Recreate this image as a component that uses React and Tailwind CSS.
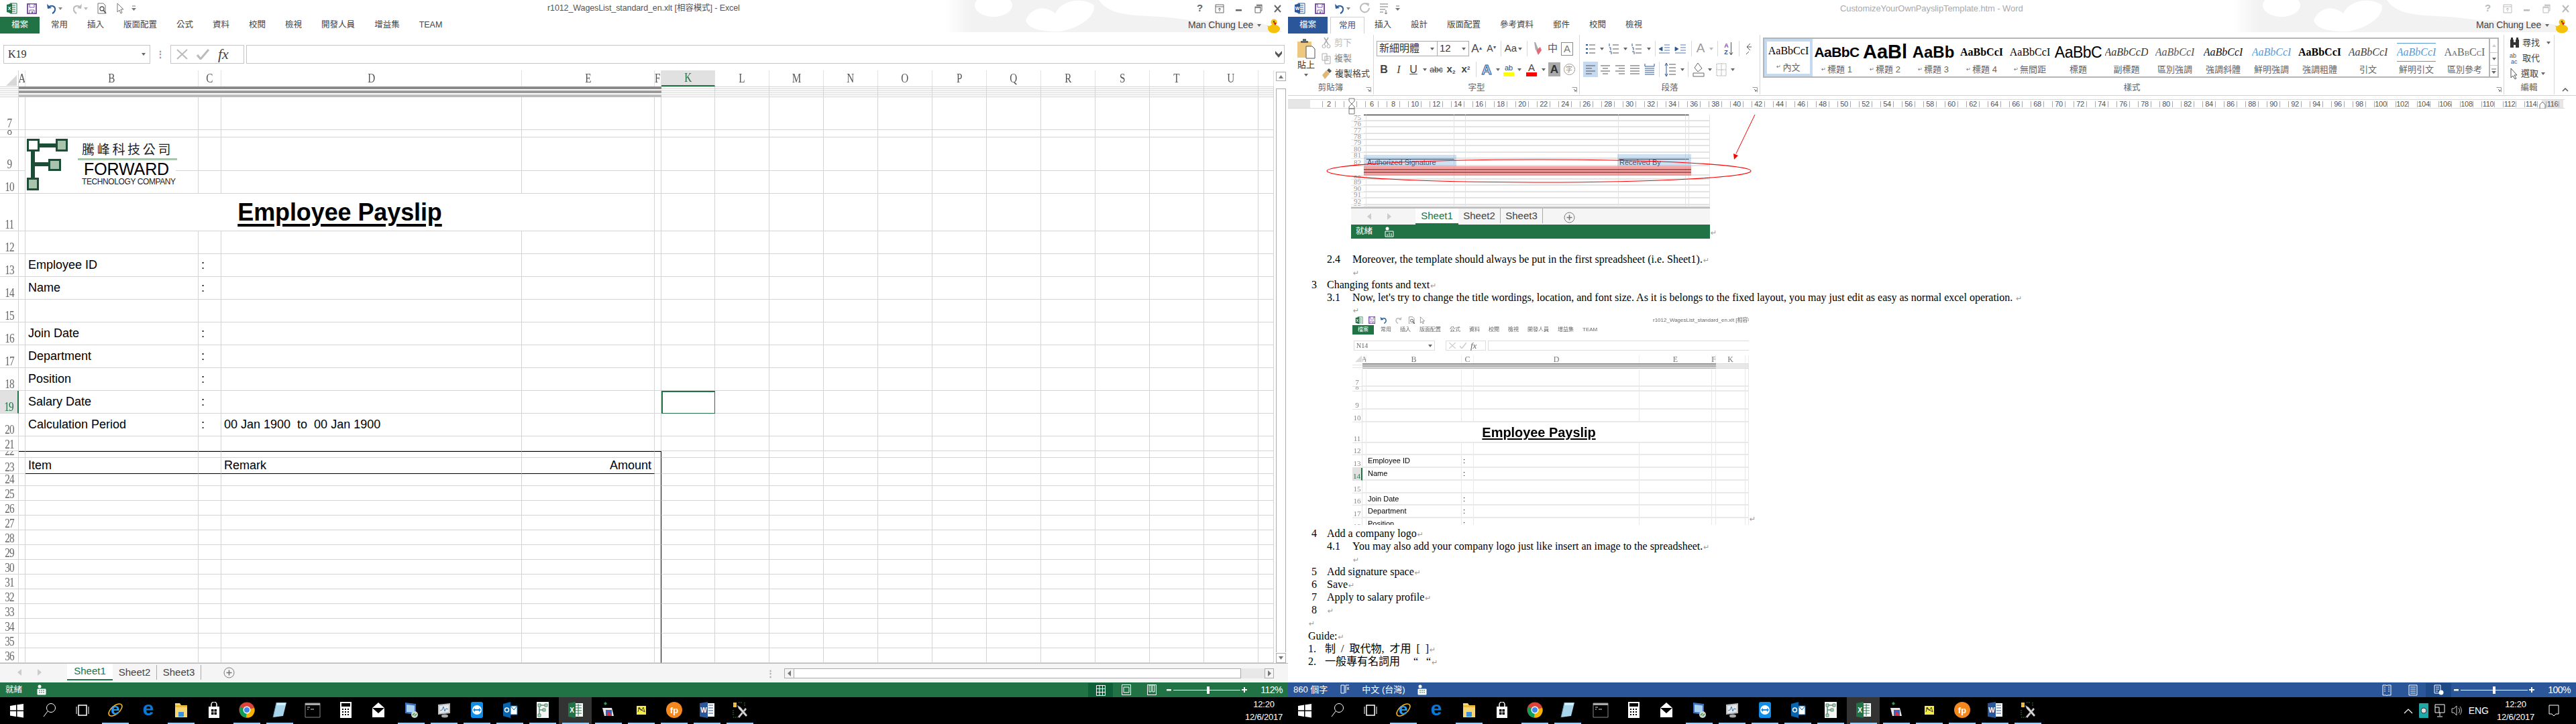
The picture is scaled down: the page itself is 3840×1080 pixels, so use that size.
import clsx from 'clsx'

const SERIF = "font-['Liberation_Serif','Noto_Sans_CJK_TC',serif]"
const SANS = "font-['Liberation_Sans','Noto_Sans_CJK_TC',sans-serif]"

const S = ({ w = 16, h = 16, s = 1, c, children }) => (
  <svg width={w * s} height={h * s} viewBox={`0 0 ${w} ${h}`} className={clsx('shrink-0', c)}>{children}</svg>
)

const Pil = () => <span className="font-['DejaVu_Sans'] text-[11px] text-[#9a9a9a] ml-[1px]">↵</span>
const Caret = ({ c = '#666' }) => <S w={6} h={4}><path d="M0 0h6L3 4z" fill={c} /></S>

// app logos
const AppLogo = ({ color, letter, s = 1 }) => (
  <S w={17} h={17} s={s}>
    <path d="M6 1h10v15H6z" fill="#fff" stroke={color} />
    <path d="M9 4h5M9 7h5M9 10h5M9 13h5" stroke={color} />
    <path d="M1 3l8-2v15l-8-2z" fill={color} />
    <text x="5" y="11" fontSize="7" fontWeight="bold" fill="#fff" textAnchor="middle" fontFamily="Liberation Sans">{letter}</text>
  </S>
)
const SaveIco = ({ s = 1 }) => (
  <S w={15} h={16} s={s}><path d="M1 1h13v14H1z" fill="#fff" stroke="#7d52a8" strokeWidth="2" /><path d="M4 1h7v5H4zM4 10h7v5H4z" fill="#fff" stroke="#7d52a8" /><path d="M7 12h2v3H7z" fill="#7d52a8" /></S>
)
const UndoIco = ({ c = '#2b5f9e', s = 1, flip }) => (
  <S w={16} h={16} s={s} c={flip ? '-scale-x-100' : ''}><path d="M3 6c5-4 11-2 10 4-.4 2-2 4-4 5" fill="none" stroke={c} strokeWidth="2" /><path d="M1 1l1 7 6-1z" fill={c} /></S>
)
const PreviewIco = ({ s = 1 }) => (
  <S w={16} h={17} s={s}><path d="M2 1h8l3 3v12H2z" fill="#fff" stroke="#777" /><circle cx="8" cy="9" r="3" fill="none" stroke="#555" strokeWidth="1.3" /><path d="M10 11l4 5" stroke="#555" strokeWidth="1.6" /></S>
)
const CursorIco = ({ s = 1 }) => (
  <S w={12} h={17} s={s}><path d="M2 1v13l3-3 2 5 2-1-2-5h4z" fill="#fff" stroke="#777" /></S>
)
const Customize = () => <S w={7} h={9}><path d="M1 1h5" stroke="#777" /><path d="M0 4h7L3.500 8z" fill="#777" /></S>

const Launcher = () => <S w={8} h={8}><path d="M.5.500h7v7" fill="none" stroke="#999" /><path d="M3 3l3 3M4 6h2V4" fill="none" stroke="#666" /></S>

const Deco = () => (
  <svg width="512" height="48" viewBox="0 0 512 48" className="absolute right-0 top-0">
    <defs><linearGradient id="fade"><stop offset="0" stopColor="#fff" /><stop offset="1" stopColor="#f2f2f2" /></linearGradient></defs>
    <rect width="40" height="48" fill="url(#fade)" />
    <rect x="40" width="472" height="48" fill="#f2f2f2" />
    <ellipse cx="73" cy="8" rx="28" ry="17" fill="#fff" />
    <path d="M121 30C130 10 150 8 165 20 175 0 205-5 223 8c2 22-33 37-53 39-20 0-45-2-49-17z" fill="#fff" />
    <path d="M230 0h282v48h-8c-24-23-104-13-154-20-50-8-100 2-120-28z" fill="#fff" />
  </svg>
)

const Duck = () => (
  <S w={22} h={24}>
    <ellipse cx="11" cy="17" rx="9" ry="6.500" fill="#f4c20d" />
    <path d="M3 16l-2-4 5 2z" fill="#f4c20d" />
    <circle cx="11" cy="7" r="4.500" fill="#f4c20d" />
    <path d="M10 7l3 5 2-4z" fill="#d81e05" />
    <circle cx="11" cy="6" r="1" fill="#222" />
  </S>
)

const WinControls = ({ c }) => (
  <div className={clsx('flex items-center', c)}>
    <span className="w-[29px] text-center text-[15px] font-bold">?</span>
    <span className="w-[29px] flex justify-center"><S w={14} h={14}><path d="M1 1h12v12H1zM1 4h12M7 11V6M5 8l2-2 2 2" fill="none" stroke="currentColor" /></S></span>
    <span className="w-[29px] flex justify-center"><S w={10} h={10}><path d="M0 6h9v2.500H0z" fill="currentColor" /></S></span>
    <span className="w-[29px] flex justify-center"><S w={12} h={14}><path d="M3 1h8v9H9M1 4h8v9H1zM1 5.500h8M3 2.500h8" fill="none" stroke="currentColor" /></S></span>
    <span className="w-[29px] flex justify-center"><S w={11} h={12}><path d="M1 1l9 10M10 1L1 11" stroke="currentColor" strokeWidth="2" /></S></span>
  </div>
)

const User = ({ c }) => (
  <div className={clsx('flex items-center text-[14px]', c)}>
    <span className="tracking-[-0.2px]">Man Chung Lee</span>
    <span className="ml-[6px] mr-[8px]"><Caret /></span>
    <Duck />
  </div>
)

// Excel window
const COLS = ['A', 'B', 'C', 'D', 'E', 'F', 'K', 'L', 'M', 'N', 'O', 'P', 'Q', 'R', 'S', 'T', 'U', '']
const ROWS = [7, 8, 9, 10, 11, 12, 13, 14, 15, 16, 17, 18, 19, 20, 21, 22, 23, 24, 25, 26, 27, 28, 29, 30, 31, 32, 33, 34, 35, 36]
const LABELS = { 13: 'Employee ID', 14: 'Name', 16: 'Join Date', 17: 'Department', 18: 'Position', 19: 'Salary Date', 20: 'Calculation Period' }

const cellText = (row, col) => {
  if (col === 'B' && LABELS[row]) return LABELS[row]
  if (col === 'C' && LABELS[row]) return ':'
  if (col === 'D' && row === 20) return '00 Jan 1900  to  00 Jan 1900'
  if (row === 23 && col === 'B') return 'Item'
  if (row === 23 && col === 'D') return 'Remark'
  return null
}

const Logo = () => (
  <div className="absolute left-[38px] top-[100px] w-[224px] h-[82px] bg-white flex">
    <S w={66} h={78} c="mt-[2px] ml-[2px]">
      <path d="M9 18v40M18 10h26M10 38h24" stroke="#1c4d36" strokeWidth="6" fill="none" />
      <path d="M1.500 1.500h16v16h-16z" fill="#fff" stroke="#1c4d36" strokeWidth="3" />
      <path d="M44.500 1.500h15v16h-15z" fill="#a9c4ad" stroke="#1c4d36" strokeWidth="3" />
      <path d="M33.500 31.500h16v15h-16z" fill="#a9c4ad" stroke="#1c4d36" strokeWidth="3" />
      <path d="M1.500 59.500h15v16h-15z" fill="#a9c4ad" stroke="#1c4d36" strokeWidth="3" />
    </S>
    <div className="ml-[10px] w-[148px] flex flex-col items-start">
      <div className="mt-[9px] ml-[6px] text-[19px] leading-[20px] tracking-[3.700px] text-[#222] whitespace-nowrap">騰峰科技公司</div>
      <div className="mt-[2px] h-[3px] w-[148px] bg-[#a8c8ae]" />
      <div className="mt-[1px] ml-[9px] text-[25px] leading-[24px] tracking-[-0.1px] text-black whitespace-nowrap">FORWARD</div>
      <div className="mt-[1px] ml-[6px] text-[12px] leading-[13px] tracking-[-0.4px] text-[#222] whitespace-nowrap">TECHNOLOGY  COMPANY</div>
    </div>
  </div>
)

const DARK_BARS = ['bg-[#8a8a8a]', 'bg-[#9a9a9a]', 'bg-[#bcbcbc]']

const HiddenBand = ({ dark }) => (
  <>
    {DARK_BARS.map((bg) => (
      <div key={bg} className={clsx('h-[4px]', dark ? bg : 'border-y border-[#d4d4d4]')} />
    ))}
  </>
)

const ExcelGrid = () => (
  <div className={clsx('relative grid w-[1899px] grid-cols-[28px_10px_258px_34px_448px_198px_10px_80px_repeat(10,81px)_23px] grid-rows-[24px_16px_49px_11px_50px_34px_56px_34px_repeat(8,34px)_22px_10px_24px_18px_repeat(12,22px)] text-[18px] text-black', SANS)}>
    {/* column headers */}
    <div className="relative border-r border-[#d4d4d4] overflow-hidden">
      <S w={16} h={16} c="absolute right-[2px] bottom-[1px]"><path d="M16 0v16H0z" fill="#d8d8d8" /></S>
    </div>
    {COLS.map((c) => (
      <div key={c || 'x'} className={clsx('flex items-center justify-center overflow-hidden', SERIF, 'text-[19px] border-r border-[#e2e2e2]', c === 'K' ? 'bg-[#e1e1e1] text-[#217346] border-b-2 border-b-[#217346]' : 'text-[#555]')}>
        <span className="scale-x-[0.8]">{c}</span>
      </div>
    ))}
    {/* hidden rows */}
    <div className="border-r border-[#d4d4d4] flex flex-col gap-[2px]"><HiddenBand /></div>
    {COLS.map((c, i) => (
      <div key={c || 'x'} className={clsx('flex flex-col gap-[2px]', i >= 6 && 'border-r border-[#d4d4d4]')}><HiddenBand dark={i < 6} /></div>
    ))}
    {ROWS.map((r) => (
      <div key={r} className="contents">
        <div className={clsx('flex items-end justify-center overflow-hidden border-b border-[#d4d4d4]', SERIF, 'text-[18px] leading-[18px]', r === 19 ? 'bg-[#e1e1e1] text-[#217346] border-r-2 border-r-[#217346]' : 'text-[#666] border-r')}>
          <span className="scale-x-[0.85] tracking-[-1px]">{r}</span>
        </div>
        {r === 11 ? (
          <>
            <div className="border-r border-b border-[#d4d4d4]" />
            <div className="col-span-4 border-r border-b border-[#d4d4d4] flex items-center justify-center text-[36px] font-bold tracking-[-0.1px] underline decoration-[4px] underline-offset-[5px]">Employee Payslip</div>
            {COLS.slice(5).map((c) => <div key={c || 'x'} className="border-r border-b border-[#d4d4d4]" />)}
          </>
        ) : COLS.map((c) => {
          const inBox = r >= 22 && ['A', 'B', 'C', 'D', 'E', 'F'].includes(c)
          const line = r === 23 && ['B', 'C', 'D', 'E'].includes(c)
          const text = cellText(r, c)
          return (
            <div
              key={c || 'x'}
              className={clsx(
                'relative flex items-center px-[4px] whitespace-pre overflow-visible border-r border-b',
                r === 19 && c === 'K' ? 'border-2 border-[#217346]' : 'border-[#d4d4d4]',
                r === 22 && inBox && 'border-t border-t-black',
                line && 'border-b-black',
                c === 'F' && r >= 22 && 'border-r-black',
                r === 23 && c === 'E' && 'justify-end'
              )}
            >
              {r === 23 && c === 'E' ? 'Amount' : text}
            </div>
          )
        })}
      </div>
    ))}
    <Logo />
  </div>
)

const ExcelVScroll = () => (
  <div className="w-[21px] flex flex-col pl-[3px] pr-[3px] pt-[2px]">
    <div className="h-[14px] border border-[#ababab] flex items-center justify-center"><S w={7} h={5}><path d="M3.500 0L7 5H0z" fill="#777" /></S></div>
    <div className="flex-1 mt-[11px] mb-[1px] border border-b-0 border-[#ababab]" />
    <div className="h-[15px] border border-[#ababab] flex items-center justify-center"><S w={7} h={5}><path d="M0 0h7L3.500 5z" fill="#777" /></S></div>
  </div>
)

const PlusBtn = () => (
  <S w={17} h={17}><circle cx="8.500" cy="8.500" r="7.500" fill="none" stroke="#777" /><path d="M8.500 4.500v8M4.500 8.500h8" stroke="#777" strokeWidth="1.600" /></S>
)

const MiniTabs = () => (
  <div className={clsx('flex items-start h-[26px] text-[15px] bg-[#f5f5f5] border-t-2 border-[#b8b8b8]', SANS)}>
    <div className="flex items-center gap-[24px] h-[24px] pl-[24px] w-[96px]">
      <S w={6} h={10}><path d="M6 0v10L0 5z" fill="#ccc" /></S>
      <S w={6} h={10}><path d="M0 0v10l6-5z" fill="#ccc" /></S>
    </div>
    <div className="flex items-center justify-center w-[64px] h-[24px] bg-white border-b-2 border-[#217346] text-[#217346]">Sheet1</div>
    <div className="flex items-center justify-center w-[63px] h-[22px] text-[#444] border-r border-[#aaa]">Sheet2</div>
    <div className="flex items-center justify-center w-[63px] h-[22px] text-[#444] border-r border-[#aaa]">Sheet3</div>
    <div className="ml-[31px] h-[26px] flex items-center"><PlusBtn /></div>
  </div>
)

const MacroIco = ({ chart }) => (
  <S w={14} h={16}>
    <circle cx="4" cy="3" r="2.500" fill="#fff" />
    <path d="M1 7h12v8H1z" fill={chart ? 'none' : '#fff'} stroke="#fff" />
    {chart ? <path d="M4 14v-3M7 14V9M10 14v-4" stroke="#fff" /> : <path d="M3 9h2M6 9h2M9 9h2M3 12h2M6 12h2M9 12h2" stroke="#217346" />}
  </S>
)

const ZoomSlider = ({ thumb, label }) => (
  <div className="flex items-center text-white text-[14px]">
    <S w={8} h={8}><path d="M0 3h7v2.500H0z" fill="#fff" /></S>
    <div className="relative w-[100px] h-[1px] bg-white mx-[2px]">
      <div className={clsx('absolute top-[-5px] w-[4px] h-[11px] bg-white', thumb)} />
    </div>
    <S w={8} h={8}><path d="M0 3h8v2H0zM3 0h2v8H3z" fill="#fff" /></S>
    <span className="ml-[20px] tracking-[-0.5px]">{label}</span>
  </div>
)

const SheetTabsBar = () => (
  <div className="flex items-start h-[28px] text-[15px]">
    <div className="flex items-center gap-[24px] h-[26px] pl-[26px] w-[100px]">
      <S w={6} h={10}><path d="M6 0v10L0 5z" fill="#ccc" /></S>
      <S w={6} h={10}><path d="M0 0v10l6-5z" fill="#ccc" /></S>
    </div>
    <div className="flex items-center justify-center w-[68px] h-[25px] bg-white border-b-2 border-[#217346] text-[#217346]">Sheet1</div>
    <div className="flex items-center justify-center w-[66px] h-[22px] mt-[2px] text-[#444] border-r border-[#aaa]">Sheet2</div>
    <div className="flex items-center justify-center w-[66px] h-[22px] mt-[2px] text-[#444] border-r border-[#aaa]">Sheet3</div>
    <div className="ml-[33px] h-[26px] flex items-center"><PlusBtn /></div>
    <div className="flex-1" />
    <span className="mr-[14px] mt-[5px] text-[#aaa] text-[13px] font-bold">⋮</span>
  </div>
)

const HScrollBar = () => (
  <div className="flex w-[730px] h-[15px] mt-[7px]">
    <div className="w-[15px] border border-[#ababab] flex items-center justify-center"><S w={5} h={9}><path d="M5 0v9L0 4.500z" fill="#777" /></S></div>
    <div className="w-[666px] bg-white border border-l-0 border-[#ababab]" />
    <div className="flex-1 bg-[#e8e8e8]" />
    <div className="w-[14px] border border-[#ababab] flex items-center justify-center"><S w={5} h={9}><path d="M0 0v9l5-4.500z" fill="#777" /></S></div>
  </div>
)

const ExcelWindow = () => (
  <div className="w-[1920px] flex flex-col text-[#444]">
    <div className="relative h-[50px] flex flex-col">
      <Deco />
      <div className="relative h-[25px] flex items-center">
        <div className="w-[816px] flex items-center">
          <span className="ml-[9px]"><AppLogo color="#217346" letter="X" /></span>
          <span className="ml-[14px]"><SaveIco /></span>
          <span className="ml-[14px]"><UndoIco /></span>
          <span className="ml-[2px]"><Caret c="#888" /></span>
          <span className="ml-[14px]"><UndoIco c="#bbb" flip /></span>
          <span className="ml-[2px]"><Caret c="#bbb" /></span>
          <span className="ml-[13px]"><PreviewIco /></span>
          <span className="ml-[13px]"><CursorIco /></span>
          <span className="ml-[11px]"><Customize /></span>
        </div>
        <span className="text-[12.500px] text-[#555] tracking-[-0.1px] whitespace-nowrap">r1012_WagesList_standard_en.xlt [相容模式] - Excel</span>
        <div className="flex-1" />
        <WinControls c="text-[#666] mr-[1px]" />
      </div>
      <div className="relative h-[25px] flex items-center text-[12.500px] text-[#444]">
        <div className="w-[59px] h-full bg-[#217346] text-white flex items-center justify-center mr-[17px]">檔案</div>
        <div className="flex gap-[29px]">
          {['常用', '插入', '版面配置', '公式', '資料', '校閱', '檢視', '開發人員', '增益集', 'TEAM'].map((t) => <span key={t} className="whitespace-nowrap">{t}</span>)}
        </div>
        <div className="flex-1" />
        <User c="mr-[10px] text-[#444]" />
      </div>
    </div>
    <div className="h-[17px]" />
    <div className="h-[28px] flex pl-[5px] pr-[5px]">
      <div className={clsx('w-[219px] border border-[#c6c6c6] flex items-center justify-between px-[6px] text-[16px] text-[#333]', SERIF)}>K19<Caret /></div>
      <div className="w-[30px] flex items-center justify-center text-[#999] text-[14px] font-bold">⋮</div>
      <div className="w-[110px] border border-[#c6c6c6] flex items-center pl-[8px] gap-[12px]">
        <S w={18} h={16}><path d="M1 1l15 14M16 1L1 15" stroke="#bbb" strokeWidth="2" /></S>
        <S w={20} h={16}><path d="M1 9l5 6L18 1" fill="none" stroke="#bbb" strokeWidth="3" /></S>
        <span className={clsx('text-[22px] italic text-[#444] leading-[20px]', SERIF)}>fx</span>
      </div>
      <div className="ml-[3px] flex-1 border border-[#c6c6c6] flex items-center justify-end pr-[2px]">
        <S w={12} h={14}><path d="M1 2l5 5 5-5v4L6 12 1 6z" fill="#555" /></S>
      </div>
    </div>
    <div className="h-[10px]" />
    <div className="flex h-[884px]">
      <ExcelGrid />
      <ExcelVScroll />
    </div>
    <div className="h-[1px] bg-[#b8b8b8]" />
    <div className="flex h-[28px] bg-[#f5f5f5] items-start">
      <div className="w-[1169px]"><SheetTabsBar /></div>
      <HScrollBar />
    </div>
    <div className="h-[22px] bg-[#217346] flex items-center text-white text-[12.500px]">
      <span className="ml-[8px]">就緒</span>
      <span className="ml-[22px]"><MacroIco /></span>
      <div className="flex-1" />
      <div className="w-[37px] h-[21px] mt-[1px] bg-[#0f5f38] flex items-center justify-center">
        <S w={14} h={16}><path d="M.5 .5h13v15H.5zM.5 5.500h13M.5 10.500h13M5 .5v15M9.500 .5v15" fill="none" stroke="#fff" /></S>
      </div>
      <span className="w-[39px] flex justify-center"><S w={14} h={16}><path d="M.5 .5h13v15H.5zM3 4h8v8H3z" fill="none" stroke="#fff" /></S></span>
      <span className="w-[38px] flex justify-center"><S w={14} h={16}><path d="M.5 .5h13v15H.5zM3 1h3v10H3zM8 1h3v10H8z" fill="#217346" stroke="#fff" /></S></span>
      <span className="ml-[3px] mr-[8px]"><ZoomSlider thumb="left-[50px]" label="112%" /></span>
    </div>
  </div>
)

// Word ribbon bits
const Slot = ({ w, children, active }) => (
  <div className={clsx('h-[23px] flex items-center justify-center shrink-0', w, active && 'bg-[#c5d9f1]')}>{children}</div>
)
const Sep = ({ w = 'w-[8px]' }) => <div className={clsx('shrink-0 flex justify-center h-[23px]', w)}><div className="w-[1px] h-full bg-[#d8d8d8]" /></div>
const ListIco = ({ kind }) => (
  <S w={16} h={18}>
    <path d="M6 3h9M6 9h9M6 15h9" stroke="#555" />
    {kind === 'num' ? <path d="M1 1v4M1 7h2v4M1 13h3v4" stroke="#2b5797" fill="none" /> : <path d="M1 2h3v2H1zM1 8h3v2H1zM1 14h3v2H1z" fill="#2b5797" />}
  </S>
)
const AlignIco = ({ lines }) => (
  <S w={16} h={16}><path d={lines} stroke="#555" fill="none" /></S>
)

const Group = ({ w, label, children, launcher = true }) => (
  <div className={clsx('flex h-[89px] mt-[2px] shrink-0 border-r border-[#d8d8d8] relative flex-col', w)}>
    <div className="flex-1 min-h-0">{children}</div>
    <div className="h-[19px] flex items-center justify-center text-[12.500px] text-[#666]">{label}</div>
    {launcher && <span className="absolute right-[3px] bottom-[3px]"><Launcher /></span>}
  </div>
)

const STYLES = [
  { t: 'AaBbCcI', l: '內文', p: 1, c: 'text-[16px] text-black' },
  { t: 'AaBbC', l: '標題 1', p: 1, c: "font-['Liberation_Sans'] font-bold text-[21px] text-black tracking-[-0.6px]" },
  { t: 'AaBl', l: '標題 2', p: 1, c: "font-['Liberation_Sans'] font-bold text-[29px] text-black" },
  { t: 'AaBb', l: '標題 3', p: 1, c: "font-['Liberation_Sans'] font-bold text-[24px] text-black" },
  { t: 'AaBbCcI', l: '標題 4', p: 1, c: 'font-bold text-[16px] text-black' },
  { t: 'AaBbCcI', l: '無間距', p: 1, c: 'text-[16px] text-black' },
  { t: 'AaBbC', l: '標題', c: "font-['Liberation_Sans'] text-[23px] text-black tracking-[-0.5px]" },
  { t: 'AaBbCcD', l: '副標題', c: 'italic text-[16px] text-[#333]' },
  { t: 'AaBbCcI', l: '區別強調', c: 'italic text-[16px] text-[#555]' },
  { t: 'AaBbCcI', l: '強調斜體', c: 'italic text-[16px] text-[#111]' },
  { t: 'AaBbCcI', l: '鮮明強調', c: 'italic text-[16px] text-[#5b9bd5]' },
  { t: 'AaBbCcI', l: '強調粗體', c: 'font-bold text-[16px] text-black' },
  { t: 'AaBbCcI', l: '引文', c: 'italic text-[16px] text-[#444]' },
  { t: 'AaBbCcI', l: '鮮明引文', c: 'italic text-[16px] text-[#5b9bd5] border-y border-[#5b9bd5] py-[4px] leading-[18px]' },
  { t: 'AaBbCcI', l: '區別參考', c: 'text-[16px] text-[#666] [font-variant:small-caps]' },
]

const WordRibbon = () => (
  <div className="h-[93px] flex text-[#555] border-b border-[#d0d0d0] text-[13px] items-start">
    {/* clipboard */}
    <Group w="w-[128px]" label="剪貼簿">
      <div className="flex">
        <div className="ml-[13px] w-[28px] mt-[6px] flex flex-col items-center">
          <S w={28} h={30}>
            <path d="M1 4h21v24H1z" fill="#edc87e" />
            <path d="M6 3h3V0h5v3h3v3H6z" fill="#666" />
            <path d="M14 11h9l4 4v14H14z" fill="#fff" stroke="#555" />
          </S>
          <span className="text-[13px] mt-[2px] leading-[14px] text-[#333]">貼上</span>
          <span className="mt-[6px]"><Caret /></span>
        </div>
        <div className="ml-[9px] flex flex-col mt-[3px] text-[13px] gap-[5px] leading-[18px] text-[#666]">
          <div className="flex items-center gap-[5px] text-[#bbb]">
            <S w={14} h={18}><circle cx="3.500" cy="14" r="2.500" fill="none" stroke="#aaa" /><circle cx="10.500" cy="14" r="2.500" fill="none" stroke="#aaa" /><path d="M4 11L10 1M10 11L4 1" stroke="#aaa" strokeWidth="1.500" /></S>剪下
          </div>
          <div className="flex items-center gap-[5px] text-[#888]">
            <S w={14} h={18}><path d="M1 2h7v10H1zM5 6h8v11H5zM7 9h4M7 12h4" fill="#fff" stroke="#aaa" /></S>複製
          </div>
          <div className="flex items-center gap-[4px] text-[#444]">
            <S w={16} h={18}><path d="M1 11l6-7 5 5-7 8z" fill="#dfb777" /><path d="M8 4l3-3 4 4-3 3z" fill="#555" /></S>複製格式
          </div>
        </div>
      </div>
    </Group>
    {/* font */}
    <Group w="w-[307px]" label="字型">
      <div className="flex pl-[4px] mt-[9px] items-center">
        <div className="w-[91px] h-[23px] border border-[#aaa] flex items-center justify-between pl-[3px] pr-[4px] text-[15px] text-[#333]">新細明體<Caret /></div>
        <div className="w-[47px] h-[23px] border border-l-0 border-[#aaa] flex items-center justify-between pl-[3px] pr-[4px] text-[15px] text-[#333]">12<Caret /></div>
        <Slot w="w-[22px]"><span className="text-[17px] text-[#444]">A<sup className="text-[8px] text-[#2b5797]">▴</sup></span></Slot>
        <Slot w="w-[22px]"><span className="text-[14px] text-[#444]">A<sup className="text-[8px] text-[#2b5797]">▾</sup></span></Slot>
        <Sep w="w-[6px]" />
        <Slot w="w-[32px]"><span className="text-[15px] text-[#444]">Aa</span><span className="ml-[2px]"><Caret /></span></Slot>
        <Sep />
        <Slot w="w-[24px]"><S w={14} h={22}><path d="M2 1h2l4 10-4 2z" fill="#aaa" /><path d="M5 13l6-5 2 5-5 7z" fill="#e46a7a" /></S></Slot>
        <Slot w="w-[21px]"><span className="text-[15px] text-[#555]">中</span></Slot>
        <Slot w="w-[22px]"><span className="border border-[#888] text-[15px] leading-[18px] px-[3px] text-[#777]">A</span></Slot>
      </div>
      <div className="flex pl-[4px] mt-[8px] items-center text-[#444]">
        <Slot w="w-[22px]"><b className="text-[16px]">B</b></Slot>
        <Slot w="w-[22px]"><i className={clsx('text-[16px]', SERIF)}>I</i></Slot>
        <Slot w="w-[22px]"><u className="text-[16px]">U</u></Slot>
        <Slot w="w-[12px]"><Caret /></Slot>
        <Slot w="w-[22px]"><span className="text-[12px] line-through">abc</span></Slot>
        <Slot w="w-[22px]"><span className="text-[15px] font-bold">x<sub className="text-[8px]">2</sub></span></Slot>
        <Slot w="w-[22px]"><span className="text-[15px] font-bold">x<sup className="text-[8px]">2</sup></span></Slot>
        <Sep />
        <Slot w="w-[24px]"><span className="text-[21px] font-bold text-[#cfe2f5] [-webkit-text-stroke:1px_#2b5797]">A</span></Slot>
        <Slot w="w-[10px]"><Caret /></Slot>
        <Slot w="w-[22px]"><div className="flex flex-col items-center"><span className="text-[11px] leading-[14px] text-[#444]">ab</span><div className="w-[16px] h-[6px] bg-[#ffff00]" /></div></Slot>
        <Slot w="w-[10px]"><Caret /></Slot>
        <Slot w="w-[26px]"><div className="flex flex-col items-center"><span className="text-[15px] leading-[15px] text-[#444]">A</span><div className="w-[16px] h-[6px] bg-[#ff0000]" /></div></Slot>
        <Slot w="w-[10px]"><Caret /></Slot>
        <Slot w="w-[22px]"><span className="bg-[#aaa] text-[#333] text-[17px] leading-[21px] px-[3px] font-bold">A</span></Slot>
        <Slot w="w-[22px]"><span className="w-[17px] h-[17px] rounded-full border border-[#999] text-[10px] text-[#888] flex items-center justify-center">字</span></Slot>
      </div>
    </Group>
    {/* paragraph */}
    <Group w="w-[269px]" label="段落">
      <div className="flex pl-[5px] mt-[9px] items-center">
        <Slot w="w-[22px]"><ListIco /></Slot><Slot w="w-[12px]"><Caret /></Slot>
        <Slot w="w-[24px]"><ListIco kind="num" /></Slot><Slot w="w-[10px]"><Caret /></Slot>
        <Slot w="w-[24px]"><ListIco kind="num" /></Slot><Slot w="w-[12px]"><Caret /></Slot>
        <Sep w="w-[6px]" />
        <Slot w="w-[22px]"><S w={18} h={14}><path d="M9 1h8M9 5h8M9 9h8M1 13h16M6 4L1 7l5 3z" stroke="#2b5797" fill="#2b5797" strokeWidth=".8" /></S></Slot>
        <Slot w="w-[26px]"><S w={18} h={14}><path d="M9 1h8M9 5h8M9 9h8M1 13h16M1 4l5 3-5 3z" stroke="#2b5797" fill="#2b5797" strokeWidth=".8" /></S></Slot>
        <Sep w="w-[6px]" />
        <Slot w="w-[22px]"><span className="text-[19px] text-[#999]">A</span></Slot><Slot w="w-[10px]"><Caret c="#bbb" /></Slot>
        <Sep />
        <Slot w="w-[26px]"><span className="flex flex-col text-[9px] leading-[10px] text-[#7d52a8] font-bold">A<span className="text-[#2b5797]">Z</span></span><S w={7} h={20}><path d="M3.500 0v18M1 15l2.500 4L6 15" stroke="#555" fill="none" /></S></Slot>
        <Sep w="w-[4px]" />
        <Slot w="w-[24px]"><S w={12} h={18}><path d="M9 1L4 6l5 5M4 6h7M7 13l-4 4" stroke="#555" fill="none" /></S></Slot>
      </div>
      <div className="flex pl-[5px] mt-[8px] items-center">
        <Slot w="w-[22px]" active><AlignIco lines="M1 2h14M1 6h9M1 10h14M1 14h9" /></Slot>
        <Slot w="w-[22px]"><AlignIco lines="M1 2h14M4 6h8M1 10h14M4 14h8" /></Slot>
        <Slot w="w-[22px]"><AlignIco lines="M1 2h14M6 6h9M1 10h14M6 14h9" /></Slot>
        <Slot w="w-[22px]"><AlignIco lines="M1 2h14M1 6h14M1 10h14M1 14h14" /></Slot>
        <Slot w="w-[22px]"><S w={16} h={20}><path d="M1 1v4h14V1M1 8h14M1 11h14M1 14h14M1 17h14" stroke="#2b5797" fill="none" /></S></Slot>
        <Sep w="w-[6px]" />
        <Slot w="w-[28px]"><S w={18} h={22}><path d="M7 3h10M7 8h10M7 13h10M7 18h10" stroke="#555" /><path d="M3 2v18M1 5l2-4 2 4M1 17l2 4 2-4" stroke="#2b5797" fill="none" /></S></Slot>
        <Slot w="w-[8px]"><Caret /></Slot>
        <Sep />
        <Slot w="w-[24px]"><S w={18} h={22}><path d="M8 1l6 8-6 5-5-6z" fill="#fff" stroke="#666" /><path d="M1 16h16v5H1z" fill="#fff" stroke="#666" /></S></Slot>
        <Slot w="w-[10px]"><Caret /></Slot>
        <Slot w="w-[24px]"><S w={16} h={20}><path d="M1 1h14v18H1zM8 1v18M1 10h14" fill="none" stroke="#888" strokeDasharray="1 1" /></S></Slot>
        <Slot w="w-[10px]"><Caret /></Slot>
      </div>
    </Group>
    {/* styles */}
    <Group w="w-[1109px]" label="樣式">
      <div className={clsx('ml-[4px] mt-[4px] w-[1097px] h-[60px] border-y-2 border-l-2 border-[#b5b5b5] flex', SERIF)}>
        {STYLES.map((st, i) => (
          <div key={st.l} className={clsx('w-[72px] shrink-0 flex flex-col items-center overflow-hidden', i === 0 ? 'border-4 border-[#c5d9f1]' : 'pt-[4px]')}>
            <div className="h-[32px] flex items-center whitespace-nowrap overflow-hidden"><span className={st.c}>{st.t}</span></div>
            <div className={clsx('h-[20px] flex items-center text-[13px] text-[#666] whitespace-nowrap', SANS)}>{st.p && <span className="text-[8px] mr-[2px]">↵</span>}{st.l}</div>
          </div>
        ))}
        <div className="ml-auto w-[15px] border-x-2 border-[#b5b5b5] flex flex-col text-[#999]">
          <div className="h-[21px] flex items-center justify-center border-b border-[#ccc]"><S w={6} h={4}><path d="M3 0l3 4H0z" fill="#ccc" /></S></div>
          <div className="h-[19px] flex items-center justify-center border-b border-[#ccc]"><Caret /></div>
          <div className="flex-1 flex flex-col items-center justify-center"><S w={7} h={9}><path d="M0 1h7" stroke="#666" /><path d="M0 4h7L3.500 8z" fill="#666" /></S></div>
        </div>
      </div>
    </Group>
    {/* editing */}
    <Group w="w-[75px]" label="編輯" launcher={false}>
      <div className="pl-[8px] mt-[3px] flex flex-col gap-[5px] leading-[18px] text-[13px] text-[#444]">
        <div className="flex items-center gap-[4px]"><S w={15} h={18}><path d="M1 4h5v12H1zM9 4h5v12H9zM6 8h3v4H6zM2 1h3v3H2zM10 1h3v3h-3z" fill="#333" /></S>尋找<span className="ml-[6px]"><Caret /></span></div>
        <div className="flex items-center gap-[4px]"><S w={15} h={18}><text x="0" y="8" fontSize="9" fill="#555" fontFamily="Liberation Sans">ab</text><text x="2" y="17" fontSize="9" fill="#2b5797" fontFamily="Liberation Sans">ac</text></S>取代</div>
        <div className="flex items-center gap-[4px]"><S w={13} h={18}><path d="M2 1v14l3-3 3 5 2-1-3-5h4z" fill="#fff" stroke="#555" /></S>選取<Caret /></div>
      </div>
    </Group>
    <div className="flex-1 flex items-end justify-center h-[88px]"><S w={10} h={8}><path d="M1 6l4-4 4 4" stroke="#555" strokeWidth="1.500" fill="none" /></S></div>
  </div>
)

const RULER = Array.from({ length: 58 }, (_, i) => (i + 1) * 2)

const Ruler = () => (
  <div className="relative h-[14px] mt-[5px] w-[1903px] flex border-y border-[#dadada] text-[11px] text-[#555] tracking-[-0.3px]">
    <div className="w-[33px] bg-[#e6e6e6]" />
    <div className="w-[12px]" />
    {RULER.map((n) => (
      <div key={n} className={clsx('w-[32px] flex items-center justify-center', n === 116 && 'bg-[#e6e6e6]')}>
        <div className="w-[20px] h-[9px] border-x border-[#aaa] flex items-center justify-center">{n === 4 ? '' : n}</div>
      </div>
    ))}
    <S w={10} h={25} c="absolute left-[90px] top-[-3px]"><path d="M1 1h8v4L5 9 1 5zM5 9l4 4v3H1v-3zM1 16h8v8H1z" fill="#fff" stroke="#777" /></S>
    <S w={10} h={10} c="absolute left-[1865px] top-[3px]"><path d="M5 0l4 4v6H1V4z" fill="#fff" stroke="#777" /></S>
  </div>
)

// first picture in the document
const Doc1Rows = [75, 76, 77, 78, 79, 80, 81, 82, '', 88, 89, 90, 91, 92, 93]
const D1COLS = ['A', 'B', 'C', 'D', 'E', 'F', 'K']

const DocSheet1 = () => (
  <div className="flex items-end ml-[94px] mt-[9px]">
    <div className={clsx('relative w-[535px] h-[185px] flex flex-col', SANS)}>
      <div className="h-[138px] grid grid-cols-[19px_4px_131px_17px_228px_100px_5px_31px] grid-rows-[10px_9px_10px_9px_9px_10px_9px_11px_14px_6px_9px_10px_9px_10px_3px] overflow-hidden text-[11px] text-[#334]">
        {Doc1Rows.map((r, ri) => (
          <div key={ri} className="contents">
            <div className={clsx('flex items-end justify-center overflow-hidden text-[11px] leading-[10px] text-[#999] border-b border-[#e3e3e3]', SERIF)}>{r}</div>
            {D1COLS.map((c) => (
              <div
                key={c}
                className={clsx(
                  'flex items-center whitespace-nowrap overflow-visible border-b-2 border-r border-[#e3e3e3] pl-[1px]',
                  ri === 0 && c !== 'K' && 'border-t border-t-black',
                  r === 82 && (c === 'B' || c === 'E' || c === 'F') && 'border-t border-t-[#334]'
                )}
              >
                {r === 82 && c === 'B' && 'Authorized Signature'}
                {r === 82 && c === 'E' && 'Received By'}
              </div>
            ))}
          </div>
        ))}
      </div>
      <div className="absolute left-[19px] top-[60px] w-[138px] h-[17px] bg-[#5b9bd5]/30" />
      <div className="absolute left-[397px] top-[59px] w-[110px] h-[18px] bg-[#5b9bd5]/30" />
      <div className="absolute left-[19px] top-[77px] w-[488px] h-[14px] bg-[#ee6666]/60 flex flex-col justify-center gap-[2px]">
        <div className="h-[2px] bg-[#8a3a3a]/70" /><div className="h-[2px] bg-[#8a3a3a]/70" />
      </div>
      <MiniTabs />
      <div className="h-[21px] bg-[#217346] flex items-center text-white text-[12.500px] shrink-0">
        <span className="ml-[7px]">就緒</span><span className="ml-[18px]"><MacroIco chart /></span>
      </div>
      <svg width="620" height="110" viewBox="0 0 620 110" className="absolute left-0 top-0 overflow-visible">
        <ellipse cx="280" cy="84" rx="316" ry="17" fill="none" stroke="#f00" strokeWidth="1.200" />
        <path d="M602 0L574 58" stroke="#f00" />
        <path d="M571 67l-1-9 7 3z" fill="#f00" />
      </svg>
    </div>
    <Pil />
  </div>
)

// second picture in the document
const D2COLS = ['A', 'B', 'C', 'D', 'E', 'F', 'K', '']
const D2ROWS = [7, 8, 9, 10, 11, 12, 13, 14, 15, 16, 17, 18]
const D2LABELS = { 13: 'Employee ID', 14: 'Name', 16: 'Join Date', 17: 'Department', 18: 'Position' }

const DocSheet2 = () => (
  <div className="flex items-end ml-[96px]">
    <div className={clsx('w-[591px] h-[313px] flex flex-col overflow-hidden text-[#666] blur-[0.4px]', SANS)}>
      <div className="h-[15px] flex items-center">
        <div className="w-[448px] shrink-0 flex items-center">
          <span className="ml-[4px]"><AppLogo color="#217346" letter="X" s={0.7} /></span>
          <span className="ml-[8px]"><SaveIco s={0.7} /></span>
          <span className="ml-[7px]"><UndoIco s={0.7} /></span>
          <span className="ml-[10px]"><UndoIco c="#bbb" flip s={0.7} /></span>
          <span className="ml-[9px]"><PreviewIco s={0.7} /></span>
          <span className="ml-[6px]"><CursorIco s={0.7} /></span>
        </div>
        <span className="text-[8px] whitespace-nowrap">r1012_WagesList_standard_en.xlt [相容模式] -</span>
      </div>
      <div className="h-[14px] flex items-center text-[8px]">
        <div className="w-[32px] h-full bg-[#217346] text-white flex items-center justify-center mr-[10px]">檔案</div>
        <div className="flex gap-[13px] whitespace-nowrap">
          {['常用', '插入', '版面配置', '公式', '資料', '校閱', '檢視', '開發人員', '增益集', 'TEAM'].map((t) => <span key={t}>{t}</span>)}
        </div>
      </div>
      <div className="h-[9px]" />
      <div className="h-[15px] flex pl-[2px]">
        <div className={clsx('w-[121px] border border-[#ddd] flex items-center justify-between px-[3px] text-[10px]', SERIF)}>N14<Caret /></div>
        <div className="w-[16px]" />
        <div className="w-[60px] border border-[#ddd] flex items-center pl-[4px] gap-[6px]">
          <S w={10} h={9}><path d="M0 0l10 9M10 0L0 9" stroke="#ccc" strokeWidth="1.300" /></S>
          <S w={10} h={9}><path d="M0 5l3 4 7-9" stroke="#ccc" strokeWidth="1.500" fill="none" /></S>
          <span className={clsx('text-[13px] italic leading-[12px]', SERIF)}>fx</span>
        </div>
        <div className="ml-[3px] flex-1 border border-r-0 border-[#ddd]" />
      </div>
      <div className="h-[7px]" />
      <div className="h-[253px] overflow-hidden grid grid-cols-[15px_6px_142px_18px_247px_108px_6px_44px_5px] grid-rows-[12px_9px_26px_7px_27px_19px_31px_18px_19px_19px_19px_18px_19px_19px] text-[11px] text-black">
        <div><S w={10} h={10} c="ml-[4px]"><path d="M10 0v10H0z" fill="#ddd" /></S></div>
        {D2COLS.map((c) => (
          <div key={c || 'x'} className={clsx('flex items-center justify-center overflow-hidden text-[12px] text-[#777] border-r border-[#eee]', SERIF)}>{c}</div>
        ))}
        <div className="border-y border-[#e3e3e3] my-[2px]" />
        {D2COLS.map((c, i) => (
          <div key={c || 'x'} className={clsx('flex flex-col gap-[1px]', i < 6 ? '' : 'border-r border-[#e3e3e3]')}>
            <div className={clsx('h-[2px]', i < 6 ? 'bg-[#8a8a8a]' : 'bg-[#ddd]')} />
            <div className={clsx('h-[2px]', i < 6 ? 'bg-[#9a9a9a]' : 'bg-[#ddd]')} />
            <div className={clsx('h-[2px]', i < 6 ? 'bg-[#bbb]' : 'bg-[#ddd]')} />
          </div>
        ))}
        {D2ROWS.map((r) => (
          <div key={r} className="contents">
            <div className={clsx('flex items-end justify-center overflow-hidden text-[11px] leading-[12px] border-b border-[#e3e3e3]', SERIF, r === 14 ? 'bg-[#e1e1e1] text-[#217346] border-r-2 border-r-[#217346]' : 'text-[#888] border-r')}>{r}</div>
            {r === 11 ? (
              <>
                <div className="border-r border-b-2 border-[#e9e9e9]" />
                <div className="col-span-4 border-r border-b-2 border-[#e9e9e9] flex items-center justify-center text-[20px] font-bold underline decoration-2 underline-offset-2 tracking-[-0.05px]">Employee Payslip</div>
                {D2COLS.slice(5).map((c) => <div key={c || 'x'} className="border-r border-b-2 border-[#e9e9e9]" />)}
              </>
            ) : D2COLS.map((c) => (
              <div key={c || 'x'} className="flex items-center whitespace-nowrap border-r border-b-2 border-[#e9e9e9] pl-[2px]">
                {c === 'B' && D2LABELS[r]}
                {c === 'C' && D2LABELS[r] && ':'}
              </div>
            ))}
          </div>
        ))}
      </div>
    </div>
    <Pil />
  </div>
)

const DocLine = ({ pad, num, numW, children, h = 'h-[19px]' }) => (
  <div className={clsx('flex items-center whitespace-pre', h, pad)}>
    {num && <span className={clsx('shrink-0', numW)}>{num}</span>}
    <span>{children}<Pil /></span>
  </div>
)

const WordWindow = () => (
  <div className="w-[1920px] flex flex-col">
    <div className="relative h-[50px] flex flex-col">
      <Deco />
      <div className="relative h-[25px] flex items-center">
        <div className="w-[823px] flex items-center">
          <span className="ml-[9px]"><AppLogo color="#2b579a" letter="W" /></span>
          <span className="ml-[14px]"><SaveIco /></span>
          <span className="ml-[14px]"><UndoIco /></span>
          <span className="ml-[2px]"><Caret c="#888" /></span>
          <span className="ml-[14px]"><S w={16} h={17}><path d="M12 3a6.500 6.500 0 1 0 2 5" fill="none" stroke="#bbb" strokeWidth="2" /><path d="M9 0l5 1-1 5z" fill="#bbb" /></S></span>
          <span className="ml-[13px]"><S w={14} h={18}><path d="M1 2h12M1 6h12M1 10h8M1 14h5M10 11v6M8 15l2 2 2-2" fill="none" stroke="#777" /></S></span>
          <span className="ml-[10px]"><Customize /></span>
        </div>
        <span className="text-[13px] text-[#aaa] tracking-[-0.1px] whitespace-nowrap">CustomizeYourOwnPayslipTemplate.htm - Word</span>
        <div className="flex-1" />
        <WinControls c="text-[#bbb] mr-[1px]" />
      </div>
      <div className="relative h-[25px] flex items-center text-[12.500px] text-[#444]">
        <div className="w-[59px] h-full bg-[#2b579a] text-white flex items-center justify-center mr-[4px]">檔案</div>
        <div className="w-[51px] h-full bg-white border border-b-0 border-[#d0d0d0] text-[#2b579a] flex items-center justify-center mr-[15px]">常用</div>
        <div className="flex gap-[29px]">
          {['插入', '設計', '版面配置', '參考資料', '郵件', '校閱', '檢視'].map((t) => <span key={t} className="whitespace-nowrap">{t}</span>)}
        </div>
        <div className="flex-1" />
        <User c="mr-[10px]" />
      </div>
    </div>
    <WordRibbon />
    <Ruler />
    <div className={clsx('flex-1 min-h-0 overflow-hidden text-[16px] text-black', SERIF)}>
      <DocSheet1 />
      <div className="h-[21px]" />
      <DocLine pad="pl-[58px]" num="2.4" numW="w-[38px]">Moreover, the template should always be put in the first spreadsheet (i.e. Sheet1).</DocLine>
      <DocLine pad="pl-[96px]" />
      <DocLine pad="pl-[35px]" num="3" numW="w-[23px]">Changing fonts and text</DocLine>
      <DocLine pad="pl-[58px]" num="3.1" numW="w-[38px]">Now, let's try to change the title wordings, location, and font size. As it is belongs to the fixed layout, you may just edit as easy as normal excel operation. </DocLine>
      <DocLine pad="pl-[96px]" h="h-[17px]" />
      <DocSheet2 />
      <div className="h-[3px]" />
      <DocLine pad="pl-[35px]" num="4" numW="w-[23px]">Add a company logo</DocLine>
      <DocLine pad="pl-[58px]" num="4.1" numW="w-[38px]">You may also add your company logo just like insert an image to the spreadsheet.</DocLine>
      <DocLine pad="pl-[96px]" />
      <DocLine pad="pl-[35px]" num="5" numW="w-[23px]">Add signature space</DocLine>
      <DocLine pad="pl-[35px]" num="6" numW="w-[23px]">Save</DocLine>
      <DocLine pad="pl-[35px]" num="7" numW="w-[23px]">Apply to salary profile</DocLine>
      <DocLine pad="pl-[35px]" num="8" numW="w-[23px]" />
      <DocLine pad="pl-[30px]" h="h-[20px]" />
      <DocLine pad="pl-[30px]">Guide:</DocLine>
      <DocLine pad="pl-[30px]" num="1." numW="w-[25px]">{'制  /  取代物,  才用  [  ]'}</DocLine>
      <DocLine pad="pl-[30px]" num="2." numW="w-[25px]">{'一般專有名詞用     “   “'}</DocLine>
    </div>
    <div className="h-[22px] bg-[#2b579a] flex items-center text-white text-[13px] shrink-0">
      <span className="ml-[8px]">860 個字</span>
      <span className="ml-[19px]"><S w={14} h={16}><path d="M1 1h5v12H1zM13 1H8v12M10 4l3 4M13 4l-3 4" fill="none" stroke="#fff" /></S></span>
      <span className="ml-[18px]">中文 (台灣)</span>
      <span className="ml-[18px]"><MacroIco /></span>
      <div className="flex-1" />
      <span className="w-[38px] flex justify-center"><S w={14} h={17}><path d="M1 1h5l1 1 1-1h5v15H8l-1 1-1-1H1zM3 4h2M3 7h2M3 10h2M9 4h2M9 7h2M9 10h2" fill="none" stroke="#fff" /></S></span>
      <span className="w-[39px] flex justify-center"><S w={14} h={17}><path d="M1 1h12v15H1zM3 4h8M3 7h8M3 10h8M3 13h8" fill="none" stroke="#fff" /></S></span>
      <div className="w-[38px] h-[21px] mt-[1px] bg-[#1e4a87] flex items-center justify-center">
        <S w={15} h={17}><path d="M1 1h9v12H1zM3 4h5M3 7h5M3 10h3" fill="none" stroke="#fff" /><circle cx="11" cy="12" r="3.500" fill="#fff" /></S>
      </div>
      <span className="ml-[4px] mr-[8px]"><ZoomSlider thumb="left-[48px]" label="100%" /></span>
    </div>
  </div>
)

// taskbar
const T = ({ children, w = 24, h = 24 }) => <S w={w} h={h}>{children}</S>
const WinLogo = <T><path d="M2 5l9-1.500v8H2zM12.500 3.200L22 2v9.500h-9.500zM2 13h9v8L2 19.500zM12.500 13H22v9.500L12.500 21z" fill="#fff" /></T>
const ICONS = {
  search: <T><circle cx="14" cy="9" r="6.500" fill="none" stroke="#fff" /><path d="M9 14l-6 8" stroke="#fff" /></T>,
  task: <T><path d="M6 5h12v15H6z" fill="none" stroke="#fff" strokeWidth="1.500" /><path d="M3 7v11M21 7v11" stroke="#fff" /></T>,
  ie: <T><ellipse cx="12" cy="12" rx="12" ry="6" fill="none" stroke="#f5b914" strokeWidth="1.500" transform="rotate(-40 12 12)" /><text x="12" y="19" fontSize="24" fontWeight="bold" textAnchor="middle" fill="#2b9be8" fontFamily="Liberation Sans">e</text></T>,
  edge: <T><text x="12" y="20" fontSize="30" fontWeight="bold" textAnchor="middle" fill="#0a78d7" fontFamily="Liberation Sans">e</text></T>,
  folder: <T><path d="M3 2h7l2 3h9v18H3z" fill="#f7d774" /><path d="M3 5h18v3H3z" fill="#e8b93e" /><path d="M8 22v-7h8v7z" fill="#3a8fd8" /></T>,
  store: <T><path d="M4 7h16v17H4z" fill="#fff" /><path d="M8 7V4a4 4 0 0 1 8 0v3" fill="none" stroke="#fff" strokeWidth="1.500" /><path d="M8 11h3.500v3.500H8zM12.500 11H16v3.500h-3.500zM8 15.500h3.500V19H8zM12.500 15.500H16V19h-3.500z" fill="#000" /></T>,
  chrome: <T><circle cx="12" cy="12" r="11.500" fill="#db4437" /><path d="M12 12L1.500 7 2 17a11 11 0 0 0 9 6.500z" fill="#0f9d58" /><path d="M12 12l11 -3a11 11 0 0 1-12 14.500z" fill="#f4b400" /><circle cx="12" cy="12" r="5.500" fill="#fff" /><circle cx="12" cy="12" r="4" fill="#4285f4" /></T>,
  note: <T><path d="M7 1h15l-5 20-15 2z" fill="#a8d5ea" /><path d="M8 2h13l-1 3H7z" fill="#d7eef8" /><path d="M2 23l5-22" stroke="#5a8ea8" /></T>,
  cmd: <T><path d="M1 2h22v21H1z" fill="#000" stroke="#888" /><path d="M1 2h22v3H1z" fill="#aaa" /><path d="M4 8h4M4 11h2M9 11h5" stroke="#ddd" /></T>,
  calc: <T><path d="M4 0h17v24H4z" fill="#fff" /><path d="M6 2h13v5H6z" fill="#000" /><path d="M7 10h2v2H7zM11 10h2v2h-2zM15 10h2v2h-2zM7 14h2v2H7zM11 14h2v2h-2zM15 14h2v2h-2zM7 18h2v2H7zM11 18h2v2h-2zM15 18h2v2h-2z" fill="#000" /></T>,
  mail: <T><path d="M3 9L12 1l9 8v14H3z" fill="#fff" /><path d="M3 9h18l-9 8z" fill="#000" /></T>,
  net: <T><path d="M3 1l16 2v16L3 17z" fill="#3a6fc0" /><path d="M5 4l12 1.500V16L5 15z" fill="#a9d0ef" /><circle cx="17" cy="19" r="5" fill="#cfd6cf" /><path d="M14 20l3-3M20 18l-3 3" stroke="#3c9a3c" strokeWidth="1.500" /></T>,
  perf: <T><path d="M3 4l18-2v15l-18 2z" fill="#bcbcbc" /><path d="M5 6l14-2v11L5 17z" fill="#e7e7e7" /><path d="M6 13l3-1 2-5 2 7 2-4 3 1" fill="none" stroke="#2e7fc1" /><ellipse cx="13" cy="21" rx="5" ry="2.500" fill="#aaa" /></T>,
  tv: <T><rect x="3" y="0" width="18" height="24" rx="3" fill="#0e8ee9" /><circle cx="12" cy="12" r="7" fill="#fff" /><path d="M6 12l3-3v2h6V9l3 3-3 3v-2H9v2z" fill="#0e8ee9" /></T>,
  outlook: <T><path d="M2 3l11-3v24L2 21z" fill="#0a64ad" /><path d="M13 6h10v13H13z" fill="#fff" stroke="#0a64ad" /><path d="M13 6l5 6 5-6" fill="none" stroke="#0a64ad" /><circle cx="7.500" cy="12" r="3" fill="none" stroke="#fff" strokeWidth="1.500" /></T>,
  fwd: <T><path d="M3 0h18v24H3z" fill="#f5f5f5" /><path d="M7 5v14M7 5h9M7 12h6" stroke="#5d8f73" strokeWidth="1.500" /><path d="M5 3h4v4H5zM15 3h4v4h-4zM12 10h4v4h-4zM5 18h4v4H5z" fill="#b7cfc0" stroke="#5d8f73" /></T>,
  excel: <T><path d="M8 2h15v20H8z" fill="#fff" /><path d="M11 5h10M11 9h10M11 13h10M11 17h10M16 3v18" stroke="#217346" /><path d="M1 2l11-2v24L1 22z" fill="#217346" /><text x="6.500" y="16" fontSize="10" fontWeight="bold" fill="#fff" textAnchor="middle" fontFamily="Liberation Sans">X</text></T>,
  inst: <T><path d="M5 2l3-2 2 3-3 2z" fill="#2f9a47" /><path d="M3 9h14l3 12H6z" fill="#e7e7e7" /><path d="M8 12h9v9H8z" fill="#3a5fc8" /><path d="M12 13l4 7h-6z" fill="#d33" /></T>,
  yel: <T><path d="M5 6h14v13H5z" fill="#f5ec4b" /><path d="M7 15l2-7 3 5 3-5 2 7M7 9l10 6" fill="none" stroke="#333" /></T>,
  fp: <T w={24}><circle cx="12" cy="12" r="12" fill="#f5871f" /><text x="12" y="17" fontSize="13" fontWeight="bold" fill="#fff" textAnchor="middle" fontFamily="Liberation Sans">fp</text></T>,
  word: <T><path d="M8 2h15v20H8z" fill="#fff" /><path d="M14 5h7M14 9h7M14 13h7M14 17h7" stroke="#2b579a" /><path d="M1 2l12-2v24L1 22z" fill="#2b579a" /><text x="7" y="16" fontSize="10" fontWeight="bold" fill="#fff" textAnchor="middle" fontFamily="Liberation Sans">W</text></T>,
  tools: <T><path d="M2 1h5v7H2z" fill="#f0c33c" /><path d="M2 4h5" stroke="#c99" /><path d="M10 1h5M19 1v5M2 12v9M2 23h7" stroke="#3f9c3f" strokeDasharray="1.500 1.500" fill="none" /><path d="M9 22L20 9l2 2-11 13z" fill="#ccc" /><path d="M21 22L10 10l-2-5 5 3 10 12z" fill="#ddd" stroke="#555" strokeWidth=".6" /></T>,
}

const TASKS = [
  ['search'], ['task'], ['ie', 1], ['edge'], ['folder', 1], ['store'], ['chrome', 1], ['note', 1], ['cmd'], ['calc'], ['mail'],
  ['net', 1], ['perf', 1], ['tv', 1], ['outlook', 1], ['fwd', 1], ['excel', 1, 1], ['inst', 1], ['yel', 1], ['fp', 1], ['word', 1], ['tools', 1],
]

const Taskbar = ({ tray }) => (
  <div className="relative w-[1920px] h-10 bg-black flex text-white text-[13px]">
    <div className="w-[49px] h-10 flex items-center justify-center">{WinLogo}</div>
    {TASKS.map(([id, running, isActive]) => (
      <div key={id} className={clsx('w-[49px] h-10 flex flex-col items-center', isActive && 'bg-[#333]')}>
        <div className="flex-1 flex items-center justify-center">{ICONS[id]}</div>
        <div className={clsx('w-10 h-[2px]', running ? 'bg-[#99d1ff]' : 'bg-transparent')} />
      </div>
    ))}
    <div className="flex-1" />
    {tray && (
      <div className="flex items-center gap-[9px] mr-[10px] text-[14px]">
        <S w={14} h={9}><path d="M1 8l6-6 6 6" fill="none" stroke="#fff" strokeWidth="1.200" /></S>
        <S w={14} h={22}><rect width="14" height="22" rx="1" fill="#1fa7a7" /><circle cx="7" cy="11" r="4" fill="#ddd" stroke="#333" /></S>
        <S w={16} h={20}><path d="M1 1h14v12H1zM1 5h6v8M8 13v5M4 19h8" fill="none" stroke="#fff" /></S>
        <S w={16} h={18}><path d="M1 6h3l4-4v14l-4-4H1zM11 5c2 2 2 6 0 8M13 3c3 3 3 9 0 12" fill="none" stroke="#ccc" /></S>
        <span className="ml-[1px]">ENG</span>
      </div>
    )}
    <div className={clsx('w-[60px] flex flex-col items-center justify-center leading-[19px] tracking-[-0.2px]', tray ? 'mr-[60px]' : 'mr-[6px]')}>
      <span>12:20</span>
      <span>12/6/2017</span>
    </div>
    {tray && <span className="absolute right-[25px] top-[11px]"><S w={16} h={19}><path d="M1 1h14v13h-4l-3 3-3-3H1z" fill="none" stroke="#fff" /></S></span>}
  </div>
)

export default function App() {
  return (
    <div className={clsx('w-[3840px] h-[1080px] bg-white flex flex-col overflow-hidden', SANS)}>
      <div className="flex h-[1040px]">
        <ExcelWindow />
        <WordWindow />
      </div>
      <div className="flex h-10">
        <Taskbar />
        <Taskbar tray />
      </div>
    </div>
  )
}
